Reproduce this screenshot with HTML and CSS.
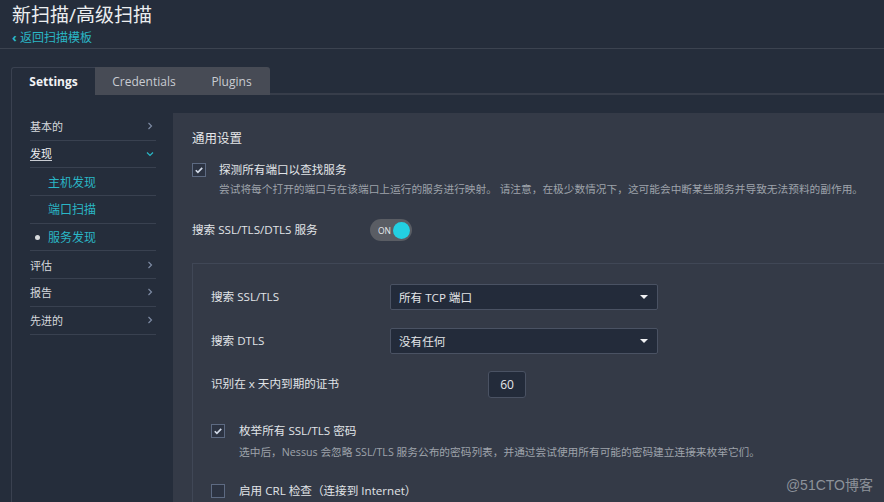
FILE: index.html
```html
<!DOCTYPE html>
<html lang="zh">
<head>
<meta charset="utf-8">
<link rel="stylesheet" href="styles.css">
</head>
<body>
<header class="page-head">
  <h1 class="title">新扫描/高级扫描</h1>
  <a class="back" href="#"><span class="back-caret">‹</span> 返回扫描模板</a>
</header>
<div class="wrap">
  <div class="tabs">
    <div class="tab active">Settings</div>
    <div class="tab-group">
      <div class="tab">Credentials</div>
      <div class="tab">Plugins</div>
    </div>
    <div class="tab-fill"></div>
  </div>
  <div class="panel">
    <nav class="side">
      <div class="item"><span>基本的</span><svg class="chev" viewBox="0 0 6 8"><path d="M1.5 1l3 3-3 3" /></svg></div>
      <div class="item open"><span class="u">发现</span><svg class="chev down" viewBox="0 0 8 6"><path d="M1 1.5l3 3 3-3" /></svg></div>
      <div class="item sub"><span>主机发现</span></div>
      <div class="item sub"><span>端口扫描</span></div>
      <div class="item sub current"><span class="dot"></span><span>服务发现</span></div>
      <div class="item"><span>评估</span><svg class="chev" viewBox="0 0 6 8"><path d="M1.5 1l3 3-3 3" /></svg></div>
      <div class="item"><span>报告</span><svg class="chev" viewBox="0 0 6 8"><path d="M1.5 1l3 3-3 3" /></svg></div>
      <div class="item"><span>先进的</span><svg class="chev" viewBox="0 0 6 8"><path d="M1.5 1l3 3-3 3" /></svg></div>
    </nav>
    <main class="content">
      <h2 class="section">通用设置</h2>
      <div class="check-row">
        <span class="box checked"><svg viewBox="0 0 13 13"><path d="M3 6.8l2.3 2.3L10 4.2" /></svg></span>
        <div class="check-text">
          <div class="label">探测所有端口以查找服务</div>
          <div class="desc">尝试将每个打开的端口与在该端口上运行的服务进行映射。 请注意，在极少数情况下，这可能会中断某些服务并导致无法预料的副作用。</div>
        </div>
      </div>
      <div class="toggle-row">
        <span class="label">搜索 SSL/TLS/DTLS 服务</span>
        <span class="toggle"><span class="on">ON</span><span class="knob"></span></span>
      </div>
      <div class="inner">
        <div class="field">
          <span class="label">搜索 SSL/TLS</span>
          <div class="select"><span>所有 TCP 端口</span><span class="caret"></span></div>
        </div>
        <div class="field">
          <span class="label">搜索 DTLS</span>
          <div class="select"><span>没有任何</span><span class="caret"></span></div>
        </div>
        <div class="field num-field">
          <span class="label">识别在 x 天内到期的证书</span>
          <div class="num">60</div>
        </div>
        <div class="check-row inner-check">
          <span class="box checked"><svg viewBox="0 0 13 13"><path d="M3 6.8l2.3 2.3L10 4.2" /></svg></span>
          <div class="check-text">
            <div class="label">枚举所有 SSL/TLS 密码</div>
            <div class="desc">选中后，Nessus 会忽略 SSL/TLS 服务公布的密码列表，并通过尝试使用所有可能的密码建立连接来枚举它们。</div>
          </div>
        </div>
        <div class="check-row inner-check last">
          <span class="box"></span>
          <div class="check-text">
            <div class="label">启用 CRL 检查（连接到 Internet）</div>
          </div>
        </div>
      </div>
    </main>
  </div>
</div>
<div class="watermark">@51CTO博客</div>
</body>
</html>
```
FILE: styles.css
```css
* { box-sizing: border-box; }
html, body { height: 100%; }
body {
  margin: 0;
  background: #252d3b;
  color: #dfe2e6;
  font-family: "Open Sans", "Noto Sans CJK SC", sans-serif;
  font-size: 12px;
  overflow: hidden;
  position: relative;
}
.page-head {
  padding: 3px 12px 0;
  height: 49px;
  border-bottom: 1px solid #3c4350;
}
.title {
  margin: 0;
  font-size: 19px;
  font-weight: 400;
  line-height: 25px;
  color: #eceef0;
}
.back {
  display: block;
  color: #2ab7c6;
  text-decoration: none;
  font-size: 12px;
  line-height: 18px;
}
.back-caret { font-weight: 700; font-size: 13px; }
.wrap {
  margin: 18px 0 0 11px;
}
.tabs {
  display: flex;
  height: 28px;
}
.tab {
  display: flex;
  align-items: center;
  justify-content: center;
  color: #c9ccd2;
  font-size: 12px;
}
.tab.active {
  width: 84px;
  color: #f2f3f5;
  font-weight: 700;
  border-top: 1px solid #3a4150;
  border-left: 1px solid #3a4150;
  border-radius: 3px 0 0 0;
}
.tab-group {
  display: flex;
  background: #474b55;
  border-radius: 0 3px 0 0;
}
.tab-group .tab:first-child { width: 98px; }
.tab-group .tab:last-child { width: 77px; }
.tab-fill {
  flex: 1;
  border-bottom: 2px solid #373d4a;
}
.panel {
  display: flex;
  border-left: 1px solid #3a4150;
  min-height: 420px;
}
.side {
  width: 161px;
  flex: none;
  padding: 18px 17px 0 18px;
}
.item {
  height: 27.7px;
  border-bottom: 1px solid #394150;
  display: flex;
  align-items: center;
  justify-content: space-between;
  padding-right: 3px;
  color: #d6d9de;
  font-size: 11px;
}
.item .u {
  color: #eef0f2;
  border-bottom: 1px solid #c9ccd2;
  line-height: 13px;
}
.chev {
  width: 6px;
  height: 8px;
  fill: none;
  stroke: #7d8aa3;
  stroke-width: 1.2;
}
.chev.down {
  width: 8px;
  height: 6px;
  stroke: #2ab7c6;
  margin-right: -1px;
}
.item.sub {
  justify-content: flex-start;
  padding-left: 18px;
  color: #2ab7c6;
  font-size: 12px;
}
.item.current { padding-left: 5px; }
.dot {
  width: 5px;
  height: 5px;
  border-radius: 50%;
  background: #d8dadd;
  margin-right: 8px;
}
.content {
  flex: 1;
  margin-top: 18px;
  background: #343a47;
  padding: 18px 0 0 19px;
}
.section {
  margin: 0;
  font-size: 12.5px;
  font-weight: 400;
  line-height: 16px;
  color: #e4e6e9;
}
.check-row {
  display: flex;
  margin-top: 16px;
}
.box {
  width: 14px;
  height: 14px;
  flex: none;
  border: 1px solid #5d6a82;
  background: #2c3342;
  display: flex;
}
.box svg {
  width: 12px;
  height: 12px;
  fill: none;
  stroke: #d2dae8;
  stroke-width: 1.8;
}
.check-text { margin-left: 13px; }
.label {
  color: #e1e4e8;
  font-size: 11.6px;
  line-height: 14px;
}
.desc {
  color: #9ea3ab;
  font-size: 10.7px;
  line-height: 14px;
  margin-top: 5px;
  white-space: nowrap;
}
.toggle-row {
  display: flex;
  align-items: center;
  margin-top: 23px;
  height: 22px;
}
.toggle-row .label { width: 178px; }
.toggle {
  width: 42px;
  height: 22px;
  border-radius: 11px;
  background: #5a5d64;
  display: flex;
  align-items: center;
  justify-content: space-between;
  padding: 0 2px 0 8px;
}
.on { font-size: 8.5px; color: #e8e9eb; }
.knob {
  width: 17px;
  height: 17px;
  border-radius: 50%;
  background: #23d0e2;
}
.inner {
  margin-top: 22px;
  border-top: 1px solid #404756;
  border-left: 1px solid #404756;
  padding: 20px 0 8px 18px;
}
.field {
  display: flex;
  align-items: center;
  height: 26px;
  margin-bottom: 18px;
}
.field .label { width: 179px; }
.select {
  width: 268px;
  height: 26px;
  background: #232b3a;
  border: 1px solid #4a5263;
  border-radius: 2px;
  display: flex;
  align-items: center;
  justify-content: space-between;
  padding: 0 9px 0 8px;
  color: #e4e6e9;
  font-size: 11.6px;
}
.caret {
  width: 0;
  height: 0;
  border-left: 4px solid transparent;
  border-right: 4px solid transparent;
  border-top: 4px solid #f0f1f3;
}
.num-field { margin-top: -1px; }
.num-field .label { width: 277px; }
.num {
  width: 38px;
  height: 27px;
  background: #232b3a;
  border: 1px solid #4a5263;
  border-radius: 3px;
  display: flex;
  align-items: center;
  justify-content: center;
  color: #e4e6e9;
}
.inner-check { margin-top: 27px; }
.inner-check .desc { margin-top: 7px; }
.inner-check.last { margin-top: 25px; }
.inner-check .check-text { margin-left: 14px; }
.watermark {
  position: absolute;
  right: 11px;
  bottom: 8px;
  color: #8d929a;
  font-size: 14px;
  font-family: "Liberation Sans", "Noto Sans CJK SC", sans-serif;
}
```
